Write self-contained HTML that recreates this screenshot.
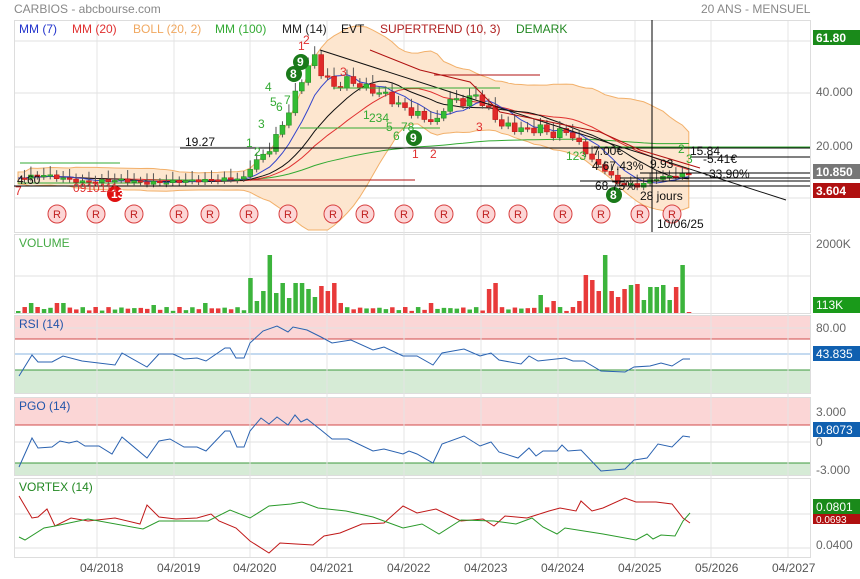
<!DOCTYPE html>
<html><head><meta charset="utf-8"><style>
body{margin:0;background:#fff;width:860px;height:579px;overflow:hidden;font-family:"Liberation Sans",sans-serif}
svg{display:block}
text{font-family:"Liberation Sans",sans-serif}
</style></head><body>
<svg id="s" width="860" height="579" xmlns="http://www.w3.org/2000/svg">
<rect width="860" height="579" fill="#fff"/>
<g fill="none" stroke="#ddd">
<rect x="14.5" y="20.5" width="796" height="212"/>
<rect x="14.5" y="234.5" width="796" height="79"/>
<rect x="14.5" y="315.5" width="796" height="78"/>
<rect x="14.5" y="397.5" width="796" height="78"/>
<rect x="14.5" y="478.5" width="796" height="79"/>
</g>
<rect x="15" y="316" width="795" height="23" fill="#fbd6d6"/>
<rect x="15" y="370" width="795" height="23" fill="#d6ebd6"/>
<line x1="15" y1="339" x2="810" y2="339" stroke="#d04a4a"/>
<line x1="15" y1="370" x2="810" y2="370" stroke="#3c9a3c"/>
<line x1="15" y1="354" x2="810" y2="354" stroke="#8ab4e0"/>
<rect x="15" y="398" width="795" height="27" fill="#fbd6d6"/>
<rect x="15" y="463" width="795" height="12" fill="#d6ebd6"/>
<line x1="15" y1="425" x2="810" y2="425" stroke="#d04a4a"/>
<line x1="15" y1="463" x2="810" y2="463" stroke="#3c9a3c"/>
<g stroke="#e2e2e2">
<line x1="15" y1="41" x2="810" y2="41"/><line x1="15" y1="93" x2="810" y2="93"/><line x1="15" y1="147" x2="810" y2="147"/><line x1="15" y1="198" x2="810" y2="198"/>
<line x1="15" y1="276" x2="810" y2="276"/>
<line x1="15" y1="328" x2="810" y2="328"/>
<line x1="15" y1="442" x2="810" y2="442"/>
<line x1="15" y1="514" x2="810" y2="514"/><line x1="15" y1="548" x2="810" y2="548"/>
</g>
<g id="dyn"></g>
<text x="14" y="13" font-size="12" fill="#888">CARBIOS - abcbourse.com</text>
<text x="701" y="13" font-size="12" fill="#888">20 ANS - MENSUEL</text>
<g font-size="12">
<text x="19" y="33" fill="#2233cc">MM (7)</text>
<text x="72" y="33" fill="#e03030">MM (20)</text>
<text x="133" y="33" fill="#f0a860">BOLL (20, 2)</text>
<text x="215" y="33" fill="#33aa33">MM (100)</text>
<text x="282" y="33" fill="#222">MM (14)</text>
<text x="341" y="33" fill="#111">EVT</text>
<text x="380" y="33" fill="#b02020">SUPERTREND (10, 3)</text>
<text x="516" y="33" fill="#228822">DEMARK</text>
<text x="19" y="247" fill="#44aa44">VOLUME</text>
<text x="19" y="328" fill="#2255aa">RSI (14)</text>
<text x="19" y="410" fill="#2255aa">PGO (14)</text>
<text x="19" y="491" fill="#228822">VORTEX (14)</text>
</g>
<g font-size="12" fill="#666">
<rect x="813" y="30" width="47" height="15" fill="#1a8a1a"/><text x="816" y="42" fill="#fff" font-weight="bold">61.80</text>
<text x="816" y="96">40.000</text>
<text x="816" y="150">20.000</text>
<rect x="813" y="164" width="47" height="15" fill="#777"/><text x="816" y="176" fill="#fff" font-weight="bold">10.850</text>
<rect x="813" y="183" width="47" height="15" fill="#b01010"/><text x="816" y="195" fill="#fff" font-weight="bold">3.604</text>
<text x="816" y="248">2000K</text>
<rect x="813" y="297" width="47" height="16" fill="#1a9a1a"/><text x="816" y="309" fill="#fff">113K</text>
<text x="816" y="332">80.00</text>
<rect x="813" y="346" width="47" height="15" fill="#1060b0"/><text x="816" y="358" fill="#fff">43.835</text>
<text x="816" y="416">3.000</text>
<rect x="813" y="422" width="47" height="15" fill="#1060b0"/><text x="816" y="434" fill="#fff">0.8073</text>
<text x="816" y="446">0</text>
<text x="816" y="474">-3.000</text>
<rect x="813" y="499" width="47" height="15" fill="#1a8a1a"/><text x="816" y="511" fill="#fff">0.0801</text>
<rect x="813" y="514" width="47" height="10" fill="#b01010"/><text x="816" y="523" fill="#fff" font-size="10">0.0693</text>
<text x="816" y="549">0.0400</text>
</g>
<g font-size="12" fill="#555">
<text x="80" y="572">04/2018</text><text x="157" y="572">04/2019</text><text x="233" y="572">04/2020</text><text x="310" y="572">04/2021</text><text x="387" y="572">04/2022</text><text x="464" y="572">04/2023</text><text x="541" y="572">04/2024</text><text x="618" y="572">04/2025</text><text x="695" y="572">05/2026</text><text x="772" y="572">04/2027</text>
</g>
<g fill="none" stroke-width="1">
<polyline stroke="#2a62b0" points="19,376 32,355 38,362 52,362 63,356 82,361 115,365 122,353 147,367 159,354 173,354 184,359 197,358 206,361 225,348 230,348 236,358 244,358 250,343 263,331 277,326 288,332 293,327 307,330 321,337 332,343 351,340 373,350 384,347 403,356 417,356 433,365 442,353 464,349 480,356 491,353 499,360 521,364 529,356 538,361 565,358 573,361 584,361 601,371 625,372 634,367 650,366 661,363 672,366 683,359 690,359"/>
<polyline stroke="#2a62b0" points="19,467 32,438 38,448 52,447 60,441 69,443 77,441 85,446 99,446 112,454 122,437 147,458 159,441 170,439 184,447 197,447 206,451 225,431 230,431 237,447 244,447 250,431 261,418 269,424 277,417 288,425 295,415 301,422 307,419 321,430 332,439 348,439 373,451 384,449 403,454 409,451 417,454 433,463 442,444 464,436 480,446 491,442 499,452 518,458 529,448 536,456 543,451 557,451 562,445 568,451 581,450 601,471 625,469 634,460 647,458 658,444 672,447 683,436 690,437"/>
<polyline stroke="#c01818" points="19,496 32,518 38,517 47,509 55,526 71,518 88,521 115,518 140,524 147,505 159,517 176,519 197,518 211,514 219,521 236,528 250,541 269,553 280,543 296,544 313,545 324,536 340,533 362,524 384,523 403,506 417,513 436,509 461,521 483,519 494,526 505,516 527,518 549,511 560,508 576,511 581,501 592,511 603,508 625,498 636,502 656,502 672,504 683,518 690,523"/>
<polyline stroke="#2a9a2a" points="19,537 25,540 44,528 55,526 88,519 143,529 159,521 208,521 230,510 250,518 269,506 291,504 302,502 318,508 346,511 373,517 403,528 422,524 439,534 461,520 494,521 516,524 532,518 543,527 557,534 565,528 603,534 636,540 647,534 653,539 661,535 675,536 683,521 690,513"/>
</g>
</svg>
<script>
(function(){
var NS="http://www.w3.org/2000/svg",g=document.getElementById('dyn');
function el(n,a,p){var e=document.createElementNS(NS,n);for(var k in a)e.setAttribute(k,a[k]);(p||g).appendChild(e);return e;}
[97,174,250,327,404,481,558,635,711,788].forEach(function(x){el('line',{x1:x,y1:21,x2:x,y2:557,stroke:'#e4e4e4'});});
var kp=[[0,178],[4,175],[10,182],[16,180],[20,183],[26,181],[30,180],[35,178],[36,168],[37,160],[39,150],[41,125],[42,110],[43,95],[44,80],[45,65],[46,58],[47,72],[48,78],[49,88],[51,80],[54,88],[57,95],[59,105],[61,112],[63,118],[65,122],[66,108],[67,100],[69,102],[71,95],[73,110],[75,125],[77,128],[79,130],[81,128],[83,135],[85,130],[87,145],[89,160],[91,170],[93,183],[96,186],[99,178],[104,174]];
var N=105,c=[];
for(var i=0;i<N;i++){for(var k=0;k<kp.length-1;k++){if(i>=kp[k][0]&&i<=kp[k+1][0]){var t=(i-kp[k][0])/(kp[k+1][0]-kp[k][0]);c[i]=kp[k][1]+t*(kp[k+1][1]-kp[k][1]);break;}}
 c[i]+=Math.sin(i*2.3)*(c[i]<150?4:1.5);}
function X(i){return 18+i*6.45;}
function ma(n){return c.map(function(v,i){var a=0,m=0;for(var j=Math.max(0,i-n+1);j<=i;j++){a+=c[j];m++;}return a/m;});}
var m20=ma(20),up=[],dn=[];
for(var i=0;i<N;i++){var a=0,m=0;for(var j=Math.max(0,i-19);j<=i;j++){a+=(c[j]-m20[i])*(c[j]-m20[i]);m++;}var sd=Math.sqrt(a/m)+3;up.push(m20[i]-2*sd);dn.push(m20[i]+2*sd);}
var bp='';for(var i=0;i<N;i++)bp+=X(i)+','+Math.max(22,up[i])+' ';for(var i=N-1;i>=0;i--)bp+=X(i)+','+Math.min(230,dn[i])+' ';
el('polygon',{points:bp,fill:'#fde6cf',stroke:'#f2b06a','stroke-width':1});
function pl(arr,col){var p='';arr.forEach(function(v,i){p+=X(i)+','+v.toFixed(1)+' ';});el('polyline',{points:p,fill:'none',stroke:col,'stroke-width':1});}
pl(ma(100).map(function(v,i){return i<20?183:v;}),'#33aa33');
pl(m20,'#e03030');pl(ma(14),'#111');pl(ma(7),'#3344cc');
for(var i=1;i<N;i++){var o=c[i-1],cl=c[i],x=X(i),gr=cl<o;var top=Math.min(o,cl),h=Math.max(1.5,Math.abs(o-cl));
 el('line',{x1:x,y1:top-3-Math.abs(Math.sin(i))*6,x2:x,y2:top+h+3,stroke:'#555'});
 el('rect',{x:x-2.5,y:top,width:5,height:h,fill:gr?'#33bb33':'#e02a2a',stroke:gr?'#228822':'#bb1111','stroke-width':0.5});}
[[180,148,810,148,'#000'],[14,186,810,186,'#000'],[250,180,415,180,'#b01010'],[320,50,786,200,'#111'],[434,75,540,75,'#b01010'],[333,88,500,88,'#33aa33'],[300,128,440,128,'#33aa33'],[20,163,120,163,'#33aa33'],[600,147,810,147,'#33aa33'],[652,20,652,232,'#000'],[580,181,810,181,'#000'],[640,173,810,173,'#000'],[690,157,810,157,'#000'],[620,178,810,178,'#000']].forEach(function(l){el('line',{x1:l[0],y1:l[1],x2:l[2],y2:l[3],stroke:l[4]});});
el('polyline',{points:'370,50 420,70 470,82 500,112 540,120 600,132 640,150 700,168',fill:'none',stroke:'#b01010'});
[57,96,134,179,210,249,288,333,365,404,444,486,518,563,601,640,672].forEach(function(x){el('circle',{cx:x,cy:214,r:9,fill:'#fcd6d6',stroke:'#d84040'});var t=el('text',{x:x-4,y:218,'font-size':11,fill:'#c02020'});t.textContent='R';});
function tx(x,y,t,col,sz){var e=el('text',{x:x,y:y,'font-size':sz||11,fill:col});e.textContent=t;}
function badge(x,y,t,col){el('circle',{cx:x,cy:y,r:8,fill:col});var e=el('text',{x:x-4,y:y+4,'font-size':12,'font-weight':'bold',fill:'#fff'});e.textContent=t;}
badge(294,74,'8','#1a7a1a');badge(301,62,'9','#1a7a1a');badge(414,138,'9','#1a7a1a');badge(614,195,'8','#1a7a1a');badge(115,194,'13','#e01010');
tx(298,50,'1','#e03030',12);tx(303,44,'2','#e03030',12);tx(340,76,'3','#e03030',12);tx(476,131,'3','#e03030',12);
tx(412,158,'1','#e03030',12);tx(430,158,'2','#e03030',12);tx(73,192,'0910111','#e03030',12);tx(15,195,'7','#e03030',12);
tx(246,147,'1','#33aa33',12);tx(254,156,'2','#33aa33',12);tx(258,128,'3','#33aa33',12);tx(265,91,'4','#33aa33',12);tx(270,106,'5','#33aa33',12);tx(276,111,'6','#33aa33',12);tx(284,104,'7','#33aa33',12);
tx(363,119,'1','#33aa33',12);tx(369,122,'234','#33aa33',12);tx(386,131,'5','#33aa33',12);tx(393,140,'6','#33aa33',12);tx(401,131,'78','#33aa33',12);
tx(566,160,'123','#33aa33',12);tx(678,153,'2','#33aa33',12);tx(686,163,'3','#33aa33',12);
tx(185,146,'19.27','#111',12);tx(17,184,'4.60','#111',12);tx(690,155,'15.84','#111',12);tx(703,163,'-5.41€','#111',12);tx(705,178,'-33.90%','#111',12);
tx(593,155,'7.00€','#111',12);tx(592,170,'4-67.43%','#111',12);tx(650,168,'9.93','#111',12);tx(657,228,'10/06/25','#111',12);tx(640,200,'28 jours','#111',12);tx(595,190,'68.75%','#111',12);
var vh=[];for(var i=0;i<N;i++){vh.push(2+Math.abs(Math.sin(i*1.7))*4);}
var sp={2:10,3:6,6:10,7:10,21:8,29:10,36:35,37:12,38:22,39:58,40:20,41:30,42:15,43:30,44:30,45:24,46:16,47:27,48:22,49:30,50:10,64:10,73:24,74:30,81:18,83:12,87:12,88:38,89:33,90:22,91:58,92:22,93:16,94:24,95:28,96:29,97:13,98:26,99:26,100:28,101:13,102:26,103:48,104:1};
for(var k in sp)vh[k]=sp[k];
for(var i=0;i<N;i++){var gr=i==0?true:c[i]<c[i-1];if(i==39||i==91||i==103||i==36||i==74)gr=(i!=74);if(i==88||i==89)gr=false;el('rect',{x:X(i)-2,y:313-vh[i],width:4.5,height:vh[i],fill:gr?'#3cb43c':'#e83a3a'});}
})();
</script>
</body></html>
